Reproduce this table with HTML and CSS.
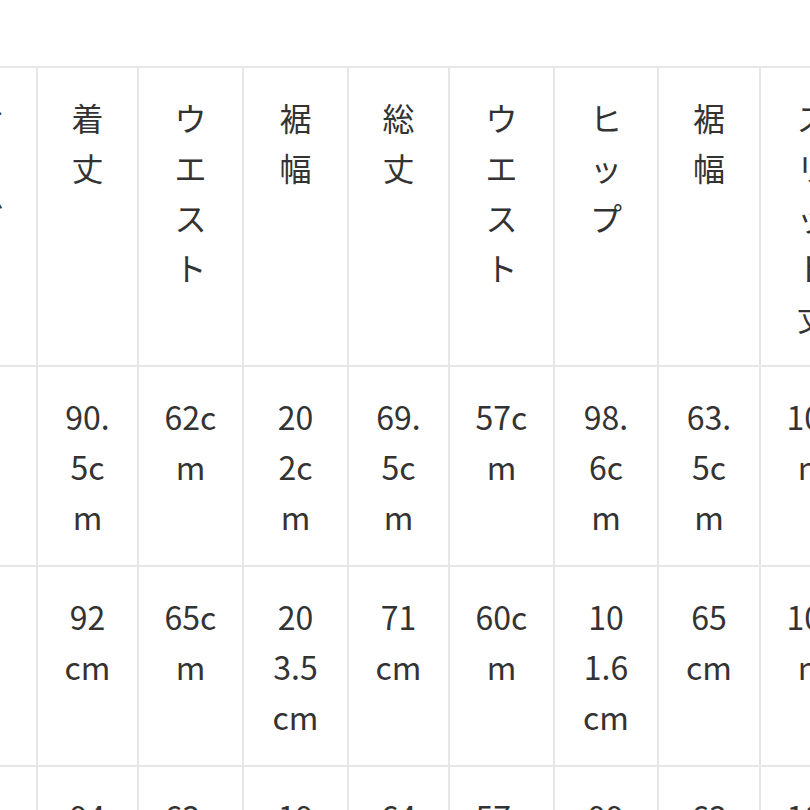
FILE: index.html
```html
<!DOCTYPE html>
<html lang="ja">
<head>
<meta charset="utf-8">
<title>サイズ表</title>
<link rel="stylesheet" href="styles.css">
</head>
<body>
<div class="wrap">
  <table class="size">
    <colgroup>
      <col class="c0"><col class="c1"><col class="c2"><col class="c3"><col class="c4"><col class="c5"><col class="c6"><col class="c7"><col class="c8">
    </colgroup>
    <tr class="head-row">
      <th>サイズ</th><th>着丈</th><th>ウエスト</th><th>裾幅</th><th>総丈</th><th>ウエスト</th><th>ヒップ</th><th>裾幅</th><th>スリット丈</th>
    </tr>
    <tr class="data-row">
      <td>S</td><td>90.5cm</td><td>62cm</td><td>202cm</td><td>69.5cm</td><td>57cm</td><td>98.6cm</td><td>63.5cm</td><td>10cm</td>
    </tr>
    <tr class="data-row">
      <td>M</td><td>92cm</td><td>65cm</td><td>203.5cm</td><td>71cm</td><td>60cm</td><td>101.6cm</td><td>65cm</td><td>10cm</td>
    </tr>
    <tr class="data-row">
      <td>L</td><td>94cm</td><td>63cm</td><td>198cm</td><td>64cm</td><td>57cm</td><td>99cm</td><td>63cm</td><td>10cm</td>
    </tr>
  </table>
</div>
</body>
</html>
```

FILE: styles.css
```css
html, body {
  margin: 0;
  background: #ffffff;
}
body {
  font-family: "Noto Sans CJK JP", "Noto Sans", sans-serif;
  color: #333333;
}
.wrap {
  width: 810px;
  height: 810px;
  overflow: hidden;
  padding-top: 66px;
  box-sizing: border-box;
}
.size {
  border-collapse: collapse;
  table-layout: fixed;
  width: 927px;
  margin-left: -63px;
}
.c0 { width: 99px; }
.c1 { width: 101px; }
.c2 { width: 105px; }
.c3 { width: 105px; }
.c4 { width: 101px; }
.c5 { width: 105px; }
.c6 { width: 104px; }
.c7 { width: 102px; }
.c8 { width: 105px; }
.size th,
.size td {
  border: 2px solid #e7e7e7;
  font-size: 32px;
  line-height: 50px;
  font-weight: 400;
  text-align: center;
  vertical-align: top;
  padding: 24px 25.5px 0;
  word-break: break-all;
}
.head-row { height: 299px; }
.data-row { height: 200px; }
```
